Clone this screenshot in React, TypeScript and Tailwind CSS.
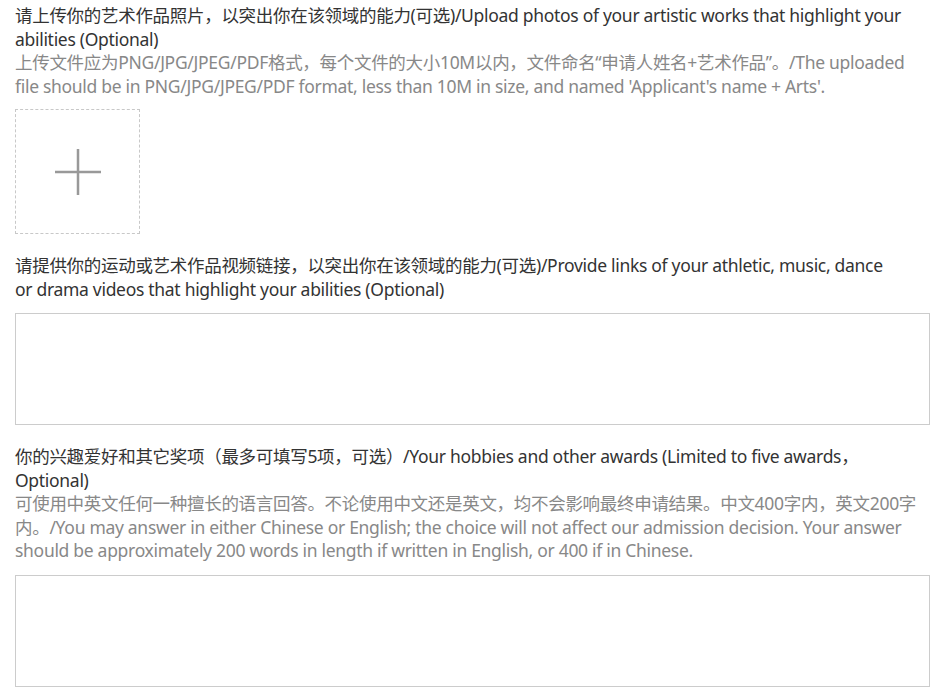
import React from 'react';

const font = { fontFamily: '"Segoe UI", "Noto Sans", "Noto Sans CJK SC", sans-serif' };

function UploadBox() {
  return (
    <button className="mt-[11px] w-[125px] h-[125px] border border-dashed border-[#c8c8c8] flex items-center justify-center bg-white">
      <svg width="46" height="46" viewBox="0 0 46 46">
        <path d="M0 23h46M23 0v46" stroke="#999" strokeWidth="2.5" />
      </svg>
    </button>
  );
}

function Field() {
  return <textarea className="mt-3 block w-[915px] h-[112px] border border-[#cccccc] resize-none outline-none" />;
}

export default function App() {
  return (
    <div className="bg-white min-h-[692px] px-[15px] pt-1 text-[17.5px] leading-[23.5px] tracking-[-0.3px] whitespace-nowrap" style={font}>
      {/* artworks */}
      <p className="text-[#333]">
        请上传你的艺术作品照片，以突出你在该领域的能力(可选)/Upload photos of your artistic works that highlight your
        <br />
        abilities (Optional)
      </p>
      <p className="text-[#888]">
        上传文件应为PNG/JPG/JPEG/PDF格式，每个文件的大小10M以内，文件命名“申请人姓名+艺术作品”。/The uploaded
        <br />
        file should be in PNG/JPG/JPEG/PDF format, less than 10M in size, and named 'Applicant's name + Arts'.
      </p>
      <UploadBox />

      {/* videos */}
      <p className="mt-5 text-[#333]">
        请提供你的运动或艺术作品视频链接，以突出你在该领域的能力(可选)/Provide links of your athletic, music, dance
        <br />
        or drama videos that highlight your abilities (Optional)
      </p>
      <Field />

      {/* hobbies */}
      <p className="mt-5 text-[#333]">
        你的兴趣爱好和其它奖项（最多可填写5项，可选）/Your hobbies and other awards (Limited to five awards，
        <br />
        Optional)
      </p>
      <p className="text-[#888]">
        可使用中英文任何一种擅长的语言回答。不论使用中文还是英文，均不会影响最终申请结果。中文400字内，英文200字
        <br />
        内。/You may answer in either Chinese or English; the choice will not affect our admission decision. Your answer
        <br />
        should be approximately 200 words in length if written in English, or 400 if in Chinese.
      </p>
      <Field />
    </div>
  );
}
